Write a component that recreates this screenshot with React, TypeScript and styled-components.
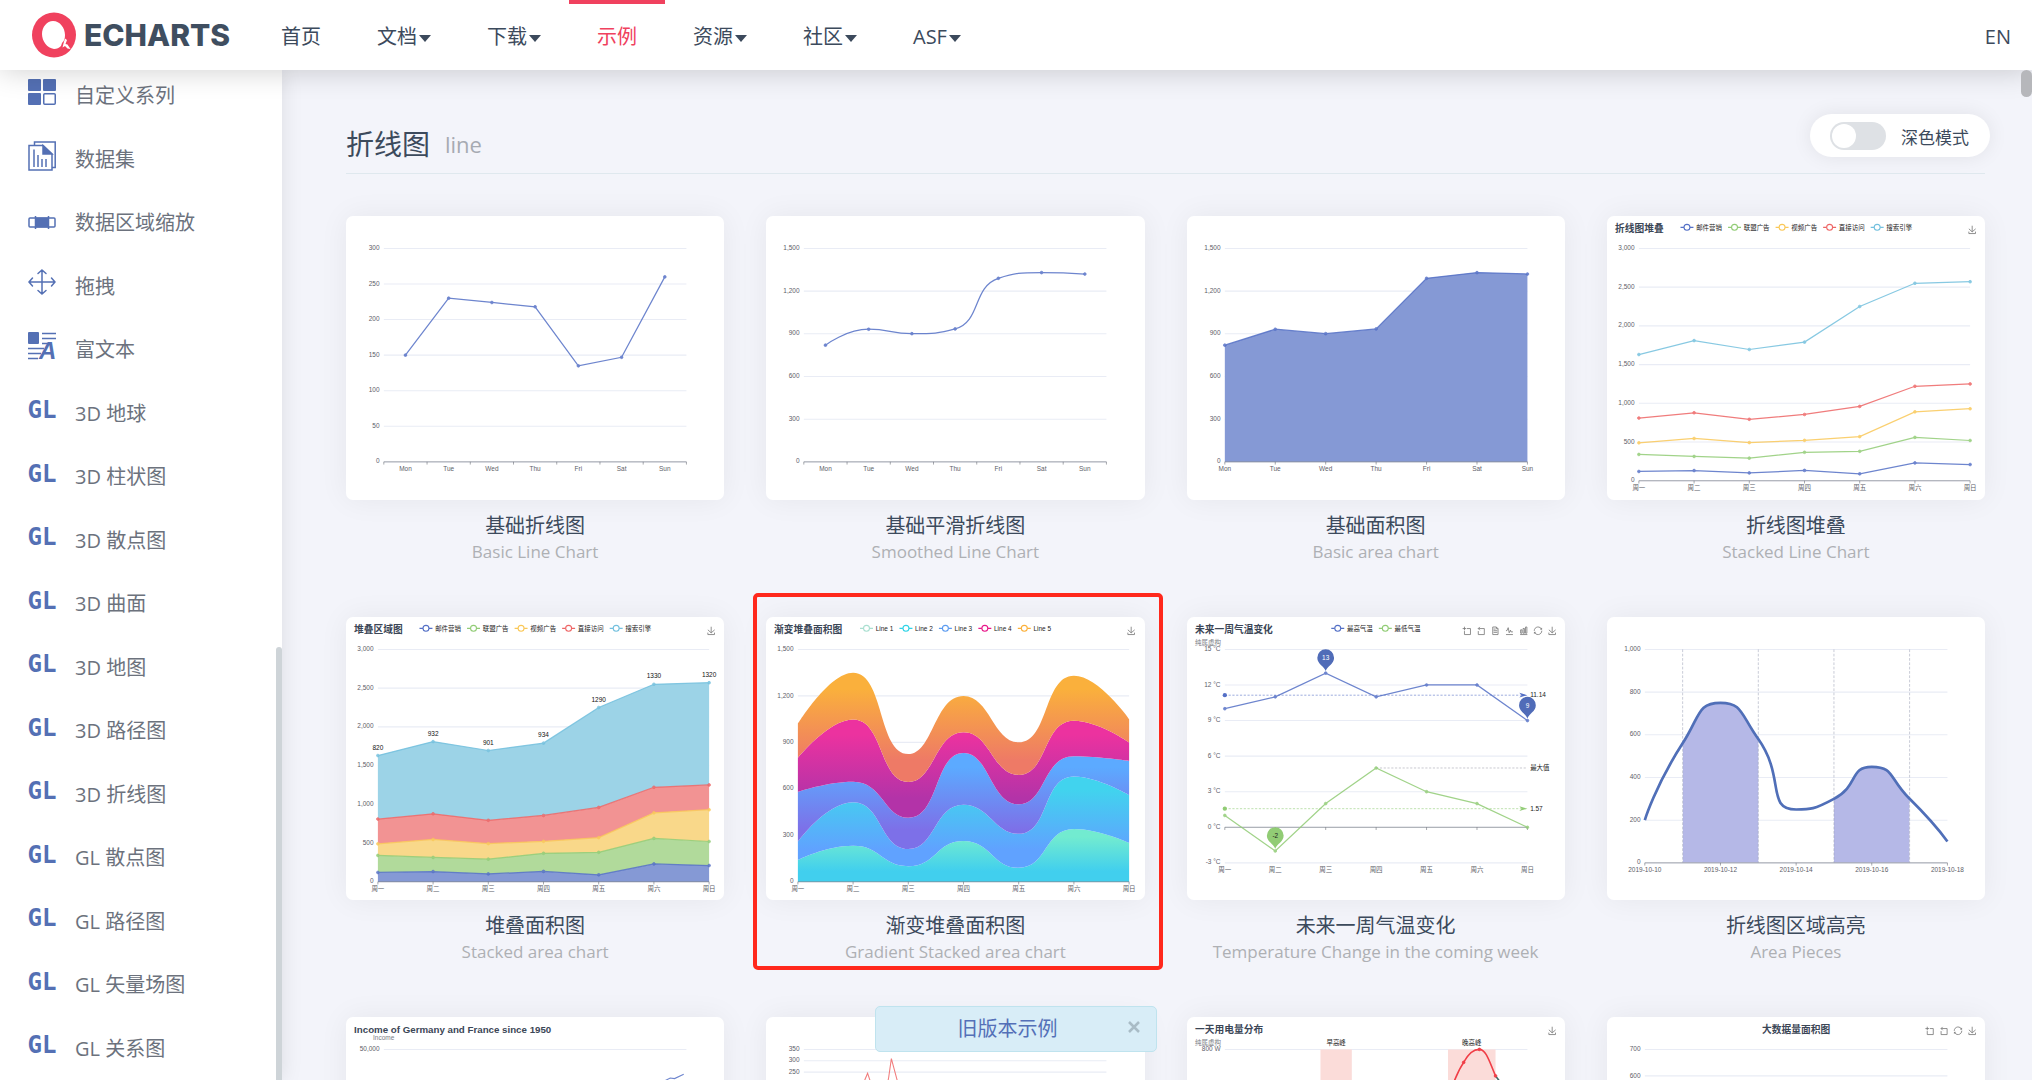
import React from "react";
import styled, { createGlobalStyle } from "styled-components";

const FONT = `"Open Sans", "Noto Sans CJK SC", sans-serif`;
const CHART_FONT = `"Liberation Sans", "Noto Sans CJK SC", sans-serif`;

const GlobalStyle = createGlobalStyle`
  *, *::before, *::after { box-sizing: border-box; }
  body { margin: 0; font-family: ${FONT}; color: #3c4a5c; background: #f3f4fa; overflow: hidden; }
  h2, h3, p, ul { margin: 0; padding: 0; font-weight: 400; }
  a { color: inherit; text-decoration: none; }
`;

/* ---------- page frame ---------- */

const Page = styled.div`
  display: flex;
  flex-direction: column;
  height: 100vh;
  overflow: hidden;
`;

const Header = styled.header`
  display: flex;
  align-items: stretch;
  flex: none;
  height: 70px;
  padding: 0 21px 0 32px;
  background: #fff;
  box-shadow: 0 0 30px rgba(0, 0, 0, 0.2);
  position: relative;
  z-index: 3;
`;

const Brand = styled.a`
  display: flex;
  align-items: center;
  gap: 8px;
  width: 221px;
`;

const BrandName = styled.span`
  font: 800 30px/32px Inter, "Liberation Sans", sans-serif;
  color: #3f4e60;
`;

const Nav = styled.nav`
  display: flex;
  flex: 1;
`;

const NavLink = styled.a<{ $active?: boolean }>`
  display: flex;
  align-items: center;
  gap: 2px;
  padding: 3px 28px 0;
  font-size: 20px;
  line-height: 28px;
  color: ${(p) => (p.$active ? "#f0415e" : "#3c4a5c")};
  box-shadow: ${(p) => (p.$active ? "inset 0 4px 0 #f0415e" : "none")};
`;

const Caret = styled.i`
  border: 6px solid transparent;
  border-top: 7px solid #3c4a5c;
  border-bottom: 0;
  margin-top: 3px;
`;

const LangLink = styled.a`
  align-self: center;
  padding-top: 3px;
  font-size: 20px;
  line-height: 28px;
`;

const Body = styled.div`
  display: flex;
  flex: 1;
  min-height: 0;
  position: relative;
`;

/* ---------- sidebar ---------- */

const Sidebar = styled.aside`
  flex: none;
  width: 282px;
  background: #fff;
  overflow: hidden;
  position: relative;
  z-index: 1;
  box-shadow: 0 0 20px rgba(0, 0, 0, 0.1);
`;

const MenuList = styled.ul`
  list-style: none;
  margin-top: -8px;
`;

const MenuItem = styled.li`
  height: 64px;
  &:nth-child(odd) {
    height: 63px;
  }
`;

const MenuLink = styled.a`
  display: flex;
  align-items: center;
  gap: 19px;
  height: 100%;
  padding-left: 28px;
  color: #6c727d;
`;

const MenuText = styled.span`
  font-size: 20px;
  line-height: 28px;
  padding-top: 5px;
`;

const IconBox = styled.span`
  display: flex;
  align-items: center;
  justify-content: center;
  width: 28px;
  padding-bottom: 2px;
  color: #5470b4;
`;

const GlMark = styled.b`
  font: 700 24px/28px "DejaVu Sans Mono", monospace;
`;

const SidebarThumb = styled.div`
  position: absolute;
  right: 0;
  top: 577px;
  bottom: 0;
  width: 6px;
  border-radius: 3px 3px 0 0;
  background: #ced4d8;
`;

const PageThumb = styled.div`
  position: absolute;
  right: 0;
  top: 0;
  width: 11px;
  height: 27px;
  border-radius: 6px;
  background: #b6b7bb;
  z-index: 4;
`;

/* ---------- gallery ---------- */

const Main = styled.main`
  flex: 1;
  min-width: 0;
  padding: 54px 47px 0 64px;
  overflow: hidden;
`;

const SectionTitle = styled.h2`
  display: flex;
  align-items: center;
  gap: 15px;
  padding-bottom: 9px;
  margin-bottom: 42px;
  border-bottom: 1px solid #dfe8ee;
  font-size: 28px;
  line-height: 40px;
`;

const SectionKey = styled.span`
  font-size: 22px;
  line-height: 28px;
  color: #a6aab2;
`;

const Gallery = styled.div`
  display: grid;
  grid-template-columns: repeat(4, 1fr);
  gap: 53px 42px;
`;

const Card = styled.a`
  display: block;
  position: relative;
  text-align: center;
`;

const Thumb = styled.div`
  aspect-ratio: 4 / 3;
  border-radius: 7px;
  background: #fff;
  overflow: hidden;
  box-shadow: 0 0 30px rgba(0, 0, 0, 0.06);
  svg {
    display: block;
    width: 100%;
    height: 100%;
  }
`;

const CardTitle = styled.h3`
  margin-top: 12px;
  font-size: 20px;
  line-height: 28px;
`;

const CardSubtitle = styled.p`
  font-size: 17px;
  line-height: 24px;
  white-space: nowrap;
  color: #aeb0b4;
`;

const Marker = styled.div`
  position: absolute;
  inset: -24px -18px -6px -13px;
  border: 4px solid #ff281c;
  border-radius: 5px;
`;

/* ---------- floating controls ---------- */

const ModePill = styled.label`
  position: absolute;
  top: 44px;
  right: 42px;
  display: flex;
  align-items: center;
  gap: 15px;
  height: 43px;
  padding: 0 21px 0 20px;
  border-radius: 22px;
  background: #fff;
  box-shadow: 0 0 20px rgba(0, 0, 0, 0.08);
`;

const ModeText = styled.span`
  padding-top: 4px;
  font-size: 17px;
  line-height: 24px;
`;

const ModeSwitch = styled.input`
  appearance: none;
  margin: 0;
  width: 56px;
  height: 28px;
  padding: 2px;
  border-radius: 14px;
  background: #dee1e5;
  &::before {
    content: "";
    display: block;
    width: 24px;
    height: 24px;
    border-radius: 50%;
    background: #fff;
  }
  &:checked {
    background: #5470c6;
  }
  &:checked::before {
    margin-left: 28px;
  }
`;

const Notice = styled.div`
  position: absolute;
  left: 50%;
  bottom: 28px;
  transform: translateX(-50%);
  z-index: 2;
  display: flex;
  align-items: center;
  width: 282px;
  height: 46px;
  padding: 0 15px 0 12px;
  border: 1px solid #bfe3ee;
  border-radius: 5px;
  background: #d8edf7;
`;

const NoticeLink = styled.a`
  flex: 1;
  text-align: center;
  font-size: 20px;
  line-height: 28px;
  color: #5470b8;
`;

const NoticeClose = styled.button`
  display: flex;
  padding: 0 0 4px;
  border: 0;
  background: none;
  color: #a9bcc6;
`;

/* ---------- chart drawing ---------- */

type Pt = [number, number];

const DAYS = ["Mon", "Tue", "Wed", "Thu", "Fri", "Sat", "Sun"];
const WEEK = ["周一", "周二", "周三", "周四", "周五", "周六", "周日"];
const PALETTE = ["#5470c6", "#91cc75", "#fac858", "#ee6666", "#73c0de"];
const AXIS = "#5c5e68";

const Canvas = styled.svg.attrs({ viewBox: "0 0 700 525", "aria-hidden": true })`
  font-family: ${CHART_FONT};
  font-size: 12px;
`;

const straight = (pts: Pt[]) => pts.map((p) => p.join(",")).join(" L");

/* Bezier body (without the leading M) through the points, clamped so that it never overshoots. */
function curve(pts: Pt[], smooth = 0.5) {
  let [c0x, c0y] = pts[0];
  let d = `${pts[0][0]},${pts[0][1]}`;
  for (let i = 1; i < pts.length; i++) {
    const [px, py] = pts[i - 1];
    const [x, y] = pts[i];
    let c1x = x;
    let c1y = y;
    let nx0 = x;
    let ny0 = y;
    if (i < pts.length - 1) {
      const [nx, ny] = pts[i + 1];
      const lp = Math.hypot(x - px, y - py);
      const ln = Math.hypot(nx - x, ny - y);
      const ratio = ln / (ln + lp);
      const clamp = (v: number, a: number, b: number) =>
        Math.max(Math.min(v, Math.max(a, b)), Math.min(a, b));
      nx0 = clamp(x + (nx - px) * smooth * ratio, nx, x);
      ny0 = clamp(y + (ny - py) * smooth * ratio, ny, y);
      c1x = clamp(x - ((nx0 - x) * lp) / ln, px, x);
      c1y = clamp(y - ((ny0 - y) * lp) / ln, py, y);
      nx0 = x + ((x - c1x) * ln) / lp;
      ny0 = y + ((y - c1y) * ln) / lp;
    }
    d += ` C${c0x},${c0y} ${c1x},${c1y} ${x},${y}`;
    c0x = nx0;
    c0y = ny0;
  }
  return d;
}

interface Box {
  x0: number;
  x1: number;
  y0: number;
  y1: number;
}
const NORMAL: Box = { x0: 70, x1: 630, y0: 60, y1: 455 };
const WIDE: Box = { x0: 59, x1: 672, y0: 60, y1: 490 };

const spread = (vals: number[], max: number, b: Box, gap = false, min = 0): Pt[] =>
  vals.map((v, i) => {
    const w = b.x1 - b.x0;
    const x = gap ? b.x0 + (w * (i + 0.5)) / vals.length : b.x0 + (w * i) / (vals.length - 1);
    return [x, b.y1 - ((v - min) / (max - min)) * (b.y1 - b.y0)];
  });

const YAxis = ({ labels, b, step }: { labels: string[]; b: Box; step?: number }) => {
  const s = step ?? (b.y1 - b.y0) / (labels.length - 1);
  return (
    <g>
      {labels.map((t, i) => (
        <g key={t}>
          <line x1={b.x0} x2={b.x1} y1={b.y0 + i * s} y2={b.y0 + i * s} stroke="#e9ecf5" strokeWidth="2" />
          <text x={b.x0 - 8} y={b.y0 + i * s + 3} textAnchor="end" fill={AXIS}>
            {t}
          </text>
        </g>
      ))}
    </g>
  );
};

const XAxis = ({
  labels,
  b,
  gap,
  lineY,
}: {
  labels: string[];
  b: Box;
  gap?: boolean;
  lineY?: number;
}) => {
  const w = b.x1 - b.x0;
  const y = lineY ?? b.y1;
  const n = gap ? labels.length : labels.length - 1;
  return (
    <g>
      <line x1={b.x0} x2={b.x1} y1={y} y2={y} stroke={AXIS} strokeWidth="1" />
      {Array.from({ length: n + 1 }, (_, i) => (
        <line key={i} x1={b.x0 + (w * i) / n} x2={b.x0 + (w * i) / n} y1={y} y2={y + 5} stroke={AXIS} />
      ))}
      {labels.map((t, i) => (
        <text key={t} x={b.x0 + (w * (gap ? i + 0.5 : i)) / n} y={b.y1 + 17} textAnchor="middle" fill={AXIS}>
          {t}
        </text>
      ))}
    </g>
  );
};

const Dots = ({ pts, color }: { pts: Pt[]; color: string }) => (
  <g>
    {pts.map(([x, y]) => (
      <circle key={x} cx={x} cy={y} r="2.5" fill={color} stroke={color} strokeWidth="1.5" />
    ))}
  </g>
);

const Line = ({ pts, color, smooth }: { pts: Pt[]; color: string; smooth?: boolean }) => (
  <g opacity="0.85">
    <path d={`M${smooth ? curve(pts) : straight(pts)}`} fill="none" stroke={color} strokeWidth="2.3" />
    <Dots pts={pts} color={color} />
  </g>
);

const Title = ({ children, x = 15, center }: { children: string; x?: number; center?: boolean }) => (
  <text x={x} y="29" fontSize="18" fontWeight="700" fill="#3b4656" textAnchor={center ? "middle" : "start"}>
    {children}
  </text>
);

const Note = ({ children, x = 15, y = 51 }: { children: string; x?: number; y?: number }) => (
  <text x={x} y={y} fill="#7a7c84">
    {children}
  </text>
);

const Legend = ({
  names,
  x,
  pitch,
  colors = PALETTE,
}: {
  names: string[];
  x: number;
  pitch: number;
  colors?: string[];
}) => (
  <g>
    {names.map((n, i) => (
      <g key={n} transform={`translate(${x + i * pitch} 21)`}>
        <line x1="-12" x2="12" y1="0" y2="0" stroke={colors[i]} strokeWidth="2" />
        <circle r="5.5" fill="#fff" stroke={colors[i]} strokeWidth="2" />
        <text x="17" y="4" fill="#222">
          {n}
        </text>
      </g>
    ))}
  </g>
);

const TOOLS: Record<string, string> = {
  zoom: "M0,13.5h26.9 M13.5,26.9V0 M32.1,13.5H58V58H13.5V32.1",
  back: "M22,1.4L9.9,13.5l12.3,12.3 M10.3,13.5H54.9v44.6H10.3v-26",
  data: "M17.5,17.3H33 M45.4,29.5h-28 M11.5,2v56H51V14.8L38.4,2H11.5z M38.4,2.2v12.7H51 M45.4,41.7h-28",
  line: "M4.1,28.9h7.1l9.3-22l7.4,38l9.7-19.7l3,12.8h14.9M4.1,58h51.4",
  bar: "M6.7,22.9h10V48h-10V22.9z M24.9,13h10v35h-10V13z M43.2,2h10v46h-10V2z M3.1,58h53.7",
  restore:
    "M47,18.9h9.8V8.7 M56.3,20.1C52.1,9,40.5,0.6,26.8,2.1C12.6,3.7,1.6,16.2,2.1,30.6 M13,41.1H3.1v10.2 M3.7,39.9c4.2,11.1,15.8,19.5,29.5,18c14.2-1.6,25.2-14.1,24.7-28.5",
  save: "M4.7,22.9L29.3,45.5L54.7,23.4 M4.6,43.6L4.6,58L53.8,58L53.8,43.6 M29.2,45.1L29.2,0",
};

const Toolbox = ({ items = ["save"] }: { items?: string[] }) => (
  <g fill="none" stroke="#777" strokeWidth="6">
    {items.map((k, i) => (
      <path
        key={k}
        d={TOOLS[k]}
        transform={`translate(${668.5 - (items.length - 1 - i) * 26.4} 18) scale(0.25)`}
      />
    ))}
  </g>
);

const BasicLine = () => (
  <Canvas>
    <YAxis labels={["300", "250", "200", "150", "100", "50", "0"]} b={NORMAL} />
    <XAxis labels={DAYS} b={NORMAL} gap />
    <Line pts={spread([150, 230, 224, 218, 135, 147, 260], 300, NORMAL, true)} color={PALETTE[0]} />
  </Canvas>
);

const TRAFFIC = [820, 932, 901, 934, 1290, 1330, 1320];
const TRAFFIC_LABELS = ["1,500", "1,200", "900", "600", "300", "0"];

const SmoothLine = () => (
  <Canvas>
    <YAxis labels={TRAFFIC_LABELS} b={NORMAL} />
    <XAxis labels={DAYS} b={NORMAL} gap />
    <Line pts={spread(TRAFFIC, 1500, NORMAL, true)} color={PALETTE[0]} smooth />
  </Canvas>
);

const BasicArea = () => {
  const pts = spread(TRAFFIC, 1500, NORMAL);
  return (
    <Canvas>
      <YAxis labels={TRAFFIC_LABELS} b={NORMAL} />
      <path d={`M${straight(pts)} L630,455 L70,455Z`} fill="#8599d5" />
      <XAxis labels={DAYS} b={NORMAL} />
      <Line pts={pts} color={PALETTE[0]} />
    </Canvas>
  );
};

const stack = (rows: number[][]) =>
  rows.map((_, k) => rows[0].map((_, i) => rows.slice(0, k + 1).reduce((s, r) => s + r[i], 0)));

const SOURCES = ["邮件营销", "联盟广告", "视频广告", "直接访问", "搜索引擎"];
const STACKED = stack([
  [120, 132, 101, 134, 90, 230, 210],
  [220, 182, 191, 234, 290, 330, 310],
  [150, 232, 201, 154, 190, 330, 410],
  [320, 332, 301, 334, 390, 330, 320],
  TRAFFIC,
]);
const STACKED_LABELS = ["3,000", "2,500", "2,000", "1,500", "1,000", "500", "0"];

const StackedLine = () => (
  <Canvas>
    <Title>折线图堆叠</Title>
    <Legend names={SOURCES} x={148} pitch={88} />
    <Toolbox />
    <YAxis labels={STACKED_LABELS} b={WIDE} />
    <XAxis labels={WEEK} b={WIDE} />
    {STACKED.map((r, i) => (
      <Line key={i} pts={spread(r, 3000, WIDE)} color={PALETTE[i]} />
    ))}
  </Canvas>
);

const AREA_FILLS = ["#8599d5", "#b1da9b", "#f9d88a", "#f29393", "#9cd3e7"];

const StackedArea = () => {
  const rows = STACKED.map((r) => spread(r, 3000, WIDE));
  const floor = spread([0, 0, 0, 0, 0, 0, 0], 3000, WIDE);
  return (
    <Canvas>
      <Title>堆叠区域图</Title>
      <Legend names={SOURCES} x={148} pitch={88} />
      <Toolbox />
      <YAxis labels={STACKED_LABELS} b={WIDE} />
      {rows.map((pts, i) => (
        <path
          key={i}
          d={`M${straight(pts)} L${straight([...(rows[i - 1] ?? floor)].reverse())}Z`}
          fill={AREA_FILLS[i]}
        />
      ))}
      <XAxis labels={WEEK} b={WIDE} />
      {rows.map((pts, i) => (
        <Line key={i} pts={pts} color={PALETTE[i]} />
      ))}
      {rows[4].map(([x, y], i) => (
        <text key={i} x={x} y={y - 11} textAnchor="middle" fill="#111">
          {TRAFFIC[i]}
        </text>
      ))}
    </Canvas>
  );
};

const GRADIENTS = [
  ["#72ebd0", "#41cfee"],
  ["#41d3ee", "#60a2ff"],
  ["#5caaff", "#7d70e8"],
  ["#ec329f", "#b333a8"],
  ["#fab03c", "#ee7a66"],
];

const GradientArea = () => {
  const rows = stack([
    [140, 232, 101, 264, 90, 340, 250],
    [120, 282, 111, 234, 220, 340, 310],
    [320, 132, 201, 334, 190, 130, 220],
    [220, 402, 231, 134, 190, 230, 120],
    [220, 302, 181, 234, 210, 290, 150],
  ]).map((r) => spread(r, 1500, WIDE));
  const floor: Pt[] = [
    [WIDE.x0, WIDE.y1],
    [WIDE.x1, WIDE.y1],
  ];
  return (
    <Canvas>
      <defs>
        {GRADIENTS.map(([a, z], i) => (
          <linearGradient key={i} id={`stack-${i}`} x1="0" y1="0" x2="0" y2="1">
            <stop offset="0.15" stopColor={a} />
            <stop offset="0.8" stopColor={z} />
          </linearGradient>
        ))}
      </defs>
      <Title>渐变堆叠面积图</Title>
      <Legend
        names={["Line 1", "Line 2", "Line 3", "Line 4", "Line 5"]}
        x={186}
        pitch={73}
        colors={["#a9dfd0", "#2fd3e6", "#5b9bf0", "#e8188a", "#fbb03a"]}
      />
      <Toolbox />
      <YAxis labels={TRAFFIC_LABELS} b={WIDE} />
      {rows.map((pts, i) => (
        <path
          key={i}
          d={`M${curve(pts)} L${curve([...(rows[i - 1] ?? floor)].reverse())}Z`}
          fill={`url(#stack-${i})`}
        />
      ))}
      <XAxis labels={WEEK} b={WIDE} />
    </Canvas>
  );
};

const Pin = ({ at, color, ink, children }: { at: Pt; color: string; ink: string; children: string }) => (
  <g transform={`translate(${at[0]} ${at[1]})`}>
    <path
      d="M0,-4 C-3,-13 -15.5,-17 -15.5,-28.5 A15.5,15.5 0 1 1 15.5,-28.5 C15.5,-17 3,-13 0,-4Z"
      fill={color}
    />
    <text y="-24" textAnchor="middle" fill={ink}>
      {children}
    </text>
  </g>
);

const Average = ({ y, color, label }: { y: number; color: string; label: string }) => (
  <g>
    <circle cx="70" cy={y} r="4" fill={color} />
    <line x1="70" x2="618" y1={y} y2={y} stroke={color} strokeWidth="1.5" strokeDasharray="4 3" opacity="0.7" />
    <path d={`M630,${y} l-15,-4.5 l4,4.5 l-4,4.5z`} fill={color} />
    <text x="635" y={y + 4} fill="#222">
      {label}
    </text>
  </g>
);

const Temperature = () => {
  const high = spread([10, 11, 13, 11, 12, 12, 9], 15, NORMAL, false, -3);
  const low = spread([1, -2, 2, 5, 3, 2, 0], 15, NORMAL, false, -3);
  const level = (v: number) => 455 - ((v + 3) / 18) * 395;
  return (
    <Canvas>
      <Title>未来一周气温变化</Title>
      <Note>纯属虚构</Note>
      <Legend names={["最高气温", "最低气温"]} x={279} pitch={88} />
      <Toolbox items={["zoom", "back", "data", "line", "bar", "restore", "save"]} />
      <YAxis labels={["15 °C", "12 °C", "9 °C", "6 °C", "3 °C", "0 °C", "-3 °C"]} b={NORMAL} />
      <XAxis labels={WEEK} b={NORMAL} lineY={level(0)} />
      <Average y={level(11.14)} color={PALETTE[0]} label="11.14" />
      <Average y={level(1.57)} color={PALETTE[1]} label="1.57" />
      <line x1="350" x2="630" y1={level(5)} y2={level(5)} stroke="#9a9aa8" strokeDasharray="4 3" />
      <text x="635" y={level(5) + 4} fill="#222">
        最大值
      </text>
      <Line pts={high} color={PALETTE[0]} />
      <Line pts={low} color={PALETTE[1]} />
      <Pin at={high[2]} color="#506cb8" ink="#fff">
        13
      </Pin>
      <Pin at={high[6]} color="#506cb8" ink="#fff">
        9
      </Pin>
      <Pin at={low[1]} color={PALETTE[1]} ink="#222">
        -2
      </Pin>
    </Canvas>
  );
};

const AreaPieces = () => {
  const pts = spread([200, 560, 750, 580, 250, 300, 450, 300, 100], 1000, NORMAL);
  const body = curve(pts, 0.6);
  return (
    <Canvas>
      <clipPath id="pieces">
        <rect x="140" y="0" width="140" height="455" />
        <rect x="420" y="0" width="140" height="455" />
      </clipPath>
      <YAxis labels={["1,000", "800", "600", "400", "200", "0"]} b={NORMAL} />
      <path d={`M${body} L630,455 L70,455Z`} fill="#b5b8e7" clipPath="url(#pieces)" />
      <XAxis labels={["2019-10-10", "2019-10-12", "2019-10-14", "2019-10-16", "2019-10-18"]} b={NORMAL} />
      {[140, 280, 420, 560].map((x) => (
        <line key={x} x1={x} x2={x} y1="60" y2="455" stroke="#9aa0b4" strokeDasharray="5 3" />
      ))}
      <path d={`M${body}`} fill="none" stroke="#506fb8" strokeWidth="5" />
    </Canvas>
  );
};

const Income = () => (
  <Canvas>
    <Title>Income of Germany and France since 1950</Title>
    <Note x={50} y={42}>
      Income
    </Note>
    <YAxis labels={["50,000"]} b={NORMAL} step={66} />
    <path d="M560,150 L590,118 L600,113 L608,114 L625,106" fill="none" stroke={PALETTE[0]} strokeWidth="2" opacity="0.85" />
  </Canvas>
);

const Rainfall = () => (
  <Canvas>
    <YAxis labels={["350", "300", "250"]} b={NORMAL} step={21} />
    <path
      d="M170,200 L183,116 L188,104 L194,122 L210,200 L227,112 L232,77 L243,118 L260,200"
      fill="none"
      stroke={PALETTE[3]}
      strokeWidth="2"
      opacity="0.85"
    />
  </Canvas>
);

const Electricity = () => (
  <Canvas>
    <Title>一天用电量分布</Title>
    <Note>纯属虚构</Note>
    <Toolbox />
    <YAxis labels={["800 W"]} b={NORMAL} step={49} />
    <rect x="247" y="60" width="58" height="395" fill="#fbdcd9" />
    <rect x="483" y="60" width="88" height="395" fill="#fbdcd9" />
    <text x="276" y="52" textAnchor="middle" fill="#222">
      早高峰
    </text>
    <text x="527" y="52" textAnchor="middle" fill="#222">
      晚高峰
    </text>
    <path d="M484,150 C494,116 504,96 512,84 C522,66 530,60 541,60 C554,60 560,84 571,109" fill="none" stroke="#f03e47" strokeWidth="3" />
    <path d="M571,109 L584,126" fill="none" stroke="#3f6b66" strokeWidth="3" />
    <Dots
      pts={[
        [512, 84],
        [541, 60],
        [571, 109],
      ]}
      color="#f03e47"
    />
  </Canvas>
);

const BigData = () => (
  <Canvas>
    <Title x={350} center>
      大数据量面积图
    </Title>
    <Toolbox items={["zoom", "back", "restore", "save"]} />
    <YAxis labels={["700", "600"]} b={NORMAL} step={49} />
  </Canvas>
);

/* ---------- icons ---------- */

const Logo = () => (
  <svg width="44" height="46" viewBox="0 0 44 46" aria-hidden="true">
    <ellipse cx="22" cy="23" rx="22" ry="22.5" fill="#f0415e" />
    <path
      d="M21,9 C28,9 33,16 33,23 C33,27 32,29 30,31 L29,34 C27,36 25,37 22,37 C15,36 10,29 10,22 C10,15 15,9 21,9Z"
      fill="#fff"
    />
    <path d="M33,26.5 l2,1.5 l-1.5,4 l2,0.5 l3,4.5 l-3,-0.5 l-2.5,-2.5 l-2.5,1.5 l1,-4z" fill="#fff" />
  </svg>
);

const CustomIcon = () => (
  <svg width="28" height="28" viewBox="0 0 28 28" aria-hidden="true">
    <g fill="currentColor">
      <rect width="13" height="12" rx="1" />
      <rect x="15" width="13" height="12" rx="1" />
      <rect y="14" width="13" height="12" rx="1" />
    </g>
    <rect x="15.75" y="14.75" width="11.5" height="10.5" rx="1" fill="none" stroke="currentColor" strokeWidth="1.5" />
  </svg>
);

const DatasetIcon = () => (
  <svg width="28" height="30" viewBox="0 0 28 30" fill="none" stroke="currentColor" strokeWidth="1.5" aria-hidden="true">
    <path d="M6.5,4 V1 H27.2 V26.5 H24" />
    <path d="M1,4.5 H15 L24,13 V29 H1Z" />
    <path d="M15,4.5 L24,13 H15Z" fill="currentColor" />
    <path d="M6,8.5V26 M10,14V26 M14,18V26 M18,18V26" />
  </svg>
);

const ZoomRangeIcon = () => (
  <svg width="28" height="26" viewBox="0 0 28 26" aria-hidden="true">
    <rect x="1" y="11" width="26" height="9" rx="1" fill="none" stroke="currentColor" strokeWidth="1.5" />
    <rect x="7.5" y="10.5" width="13" height="10" fill="currentColor" />
    <path d="M7.5,9V22 M20.5,9V22" stroke="currentColor" strokeWidth="1.5" />
  </svg>
);

const DragIcon = () => (
  <svg width="28" height="28" viewBox="0 0 28 28" fill="none" stroke="currentColor" strokeWidth="1.5" strokeLinecap="round" aria-hidden="true">
    <path d="M14,1V25 M1,13H27 M10,4.5L14,1L18,4.5 M10,21.5L14,25L18,21.5 M4.5,9L1,13L4.5,17 M23.5,9L27,13L23.5,17" />
  </svg>
);

const IconSvg = styled.svg`
  overflow: visible;
`;

const RichTextIcon = () => (
  <IconSvg width="28" height="30" viewBox="0 0 28 30" aria-hidden="true">
    <rect width="11" height="12" rx="1" fill="currentColor" />
    <path d="M14,1.5H28 M14,6.5H28 M14,11.5H20 M0,16.5H16 M0,21.5H13 M0,26.5H10" stroke="currentColor" strokeWidth="1.5" />
    <text x="11" y="27" fontFamily="Liberation Sans, sans-serif" fontSize="24" fontWeight="700" fontStyle="italic" fill="currentColor">
      A
    </text>
  </IconSvg>
);

const CloseIcon = () => (
  <svg width="14" height="14" viewBox="0 0 14 14" fill="none" stroke="currentColor" strokeWidth="2.5" aria-hidden="true">
    <path d="M2,2L12,12 M12,2L2,12" />
  </svg>
);

/* ---------- content ---------- */

const NAV = [
  { text: "首页" },
  { text: "文档", caret: true },
  { text: "下载", caret: true },
  { text: "示例", active: true },
  { text: "资源", caret: true },
  { text: "社区", caret: true },
  { text: "ASF", caret: true },
];

const MENU: { text: string; icon?: React.ReactNode }[] = [
  { text: "自定义系列", icon: <CustomIcon /> },
  { text: "数据集", icon: <DatasetIcon /> },
  { text: "数据区域缩放", icon: <ZoomRangeIcon /> },
  { text: "拖拽", icon: <DragIcon /> },
  { text: "富文本", icon: <RichTextIcon /> },
  { text: "3D 地球" },
  { text: "3D 柱状图" },
  { text: "3D 散点图" },
  { text: "3D 曲面" },
  { text: "3D 地图" },
  { text: "3D 路径图" },
  { text: "3D 折线图" },
  { text: "GL 散点图" },
  { text: "GL 路径图" },
  { text: "GL 矢量场图" },
  { text: "GL 关系图" },
];

const CARDS: { title?: string; sub?: string; chart: React.ReactNode; marked?: boolean }[] = [
  { title: "基础折线图", sub: "Basic Line Chart", chart: <BasicLine /> },
  { title: "基础平滑折线图", sub: "Smoothed Line Chart", chart: <SmoothLine /> },
  { title: "基础面积图", sub: "Basic area chart", chart: <BasicArea /> },
  { title: "折线图堆叠", sub: "Stacked Line Chart", chart: <StackedLine /> },
  { title: "堆叠面积图", sub: "Stacked area chart", chart: <StackedArea /> },
  { title: "渐变堆叠面积图", sub: "Gradient Stacked area chart", chart: <GradientArea />, marked: true },
  { title: "未来一周气温变化", sub: "Temperature Change in the coming week", chart: <Temperature /> },
  { title: "折线图区域高亮", sub: "Area Pieces", chart: <AreaPieces /> },
  { chart: <Income /> },
  { chart: <Rainfall /> },
  { chart: <Electricity /> },
  { chart: <BigData /> },
];

export default function App() {
  return (
    <Page>
      <GlobalStyle />
      <Header>
        <Brand href="#">
          <Logo />
          <BrandName>ECHARTS</BrandName>
        </Brand>
        <Nav>
          {NAV.map((n) => (
            <NavLink key={n.text} href="#" $active={n.active}>
              {n.text}
              {n.caret && <Caret />}
            </NavLink>
          ))}
        </Nav>
        <LangLink href="#">EN</LangLink>
      </Header>
      <Body>
        <Sidebar>
          <MenuList>
            {MENU.map((m) => (
              <MenuItem key={m.text}>
                <MenuLink href="#">
                  <IconBox>{m.icon ?? <GlMark>GL</GlMark>}</IconBox>
                  <MenuText>{m.text}</MenuText>
                </MenuLink>
              </MenuItem>
            ))}
          </MenuList>
          <SidebarThumb />
        </Sidebar>
        <Main>
          <SectionTitle>
            折线图<SectionKey>line</SectionKey>
          </SectionTitle>
          <Gallery>
            {CARDS.map((c, i) => (
              <Card key={i} href="#">
                <Thumb>{c.chart}</Thumb>
                {c.title && <CardTitle>{c.title}</CardTitle>}
                {c.sub && <CardSubtitle>{c.sub}</CardSubtitle>}
                {c.marked && <Marker />}
              </Card>
            ))}
          </Gallery>
        </Main>
        <ModePill>
          <ModeSwitch type="checkbox" />
          <ModeText>深色模式</ModeText>
        </ModePill>
        <Notice>
          <NoticeLink href="#">旧版本示例</NoticeLink>
          <NoticeClose type="button" aria-label="关闭">
            <CloseIcon />
          </NoticeClose>
        </Notice>
        <PageThumb />
      </Body>
    </Page>
  );
}
